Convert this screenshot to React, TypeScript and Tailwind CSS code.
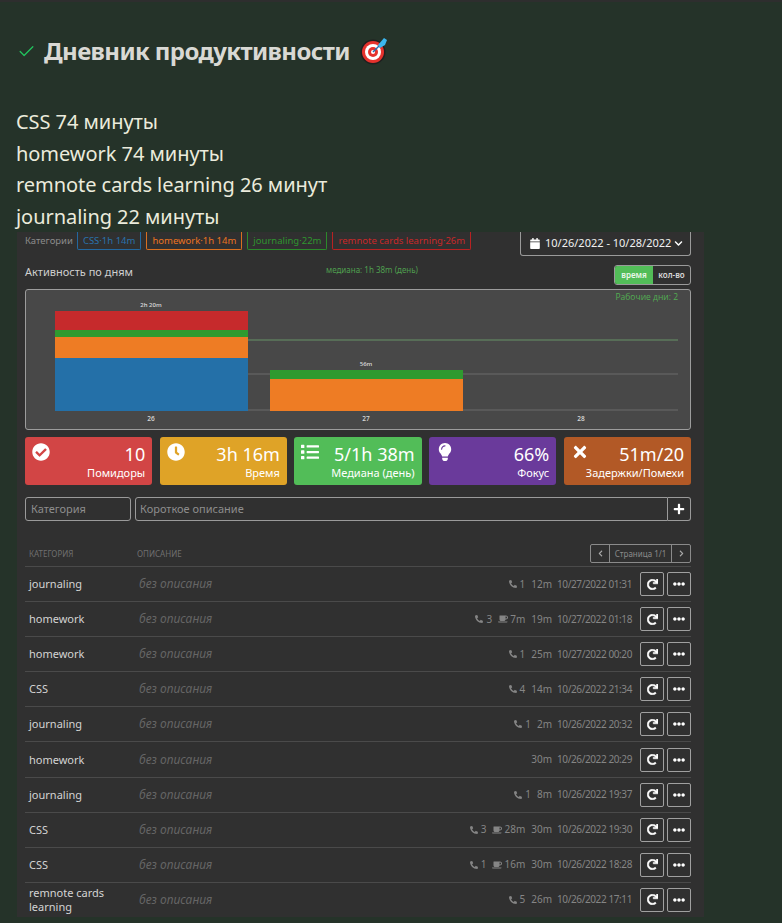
import { Check } from "lucide-react";
import { FaCalendar, FaCheckCircle, FaChevronDown, FaChevronLeft, FaChevronRight, FaClock, FaCoffee, FaEllipsisH, FaLightbulb, FaList, FaPhoneAlt, FaPlus, FaRedo, FaTimes } from "react-icons/fa";

const rows = [
  { name: "journaling", calls: "1", pause: "", dur: "12m", date: "10/27/2022 01:31" },
  { name: "homework", calls: "3", pause: "7m", dur: "19m", date: "10/27/2022 01:18" },
  { name: "homework", calls: "1", pause: "", dur: "25m", date: "10/27/2022 00:20" },
  { name: "CSS", calls: "4", pause: "", dur: "14m", date: "10/26/2022 21:34" },
  { name: "journaling", calls: "1", pause: "", dur: "2m", date: "10/26/2022 20:32" },
  { name: "homework", calls: "", pause: "", dur: "30m", date: "10/26/2022 20:29" },
  { name: "journaling", calls: "1", pause: "", dur: "8m", date: "10/26/2022 19:37" },
  { name: "CSS", calls: "3", pause: "28m", dur: "30m", date: "10/26/2022 19:30" },
  { name: "CSS", calls: "1", pause: "16m", dur: "30m", date: "10/26/2022 18:28" },
  { name: "remnote cards learning", calls: "5", pause: "", dur: "26m", date: "10/26/2022 17:11" },
];

const tags = [
  { text: "CSS·1h 14m", cls: "border-[#23689f] text-[#2a72ab]" },
  { text: "homework·1h 14m", cls: "border-[#d9701f] text-[#ec7420]" },
  { text: "journaling·22m", cls: "border-[#2b8a2b] text-[#2f952f]" },
  { text: "remnote cards learning·26m", cls: "border-[#b82222] text-[#c92828]" },
];

const cards = [
  { Icon: FaCheckCircle, value: "10", label: "Помидоры", cls: "bg-[#d24545]" },
  { Icon: FaClock, value: "3h 16m", label: "Время", cls: "bg-[#dfa327]" },
  { Icon: FaList, value: "5/1h 38m", label: "Медиана (день)", cls: "bg-[#52bd58]" },
  { Icon: FaLightbulb, value: "66%", label: "Фокус", cls: "bg-[#6a3a9b]" },
  { Icon: FaTimes, value: "51m/20", label: "Задержки/Помехи", cls: "bg-[#b25926]" },
];

function Chart() {
  return (
    <svg viewBox="0 0 664 139" className="block w-full h-[139px]">
      <line x1="29" x2="652" y1="50" y2="50" stroke="#5d7a5d" strokeWidth="1.5" />
      <line x1="29" x2="652" y1="84" y2="84" stroke="#6b6b6b" strokeWidth="1" />
      <line x1="29" x2="652" y1="120" y2="120" stroke="#6b6b6b" strokeWidth="1" />
      <rect x="29" y="21" width="193" height="19" fill="#c62a2c" />
      <rect x="29" y="40" width="193" height="7" fill="#2f9a2f" />
      <rect x="29" y="47" width="193" height="21" fill="#ee7c24" />
      <rect x="29" y="68" width="193" height="53" fill="#2470a8" />
      <rect x="244" y="80" width="193" height="9" fill="#2f9a2f" />
      <rect x="244" y="89" width="193" height="32" fill="#ee7c24" />
      <g fontFamily="'Open Sans', sans-serif" fontSize="6" fontWeight="600" fill="#d8d8d8" textAnchor="middle">
        <text x="125" y="17">2h 20m</text>
        <text x="340" y="76">56m</text>
        <text x="125" y="131" fontSize="6.5">26</text>
        <text x="340" y="131" fontSize="6.5">27</text>
        <text x="555" y="131" fontSize="6.5">28</text>
      </g>
      <text x="652" y="10" textAnchor="end" fontFamily="'Open Sans', sans-serif" fontSize="8.5" fill="#52ad52">Рабочие дни: 2</text>
    </svg>
  );
}

function Target() {
  return (
    <svg viewBox="0 0 28 28" className="w-[28px] h-[28px]">
      <circle cx="13" cy="15" r="12.5" fill="#1f1f1f" />
      <circle cx="13" cy="15" r="11" fill="#e5322d" />
      <circle cx="13" cy="15" r="8" fill="#ffffff" />
      <circle cx="13" cy="15" r="5" fill="#e5322d" />
      <circle cx="13" cy="15" r="2" fill="#ffffff" />
      <path d="M13 15 L21 7" stroke="#1f6fb5" strokeWidth="1.5" />
      <path d="M18 8 L24 1 L27 3 L25 8 L20 11 Z" fill="#3bb6ef" />
    </svg>
  );
}

export default function App() {
  return (
    <div className="w-[782px] h-[923px] overflow-hidden bg-[#253329] border-t-2 border-[#2e2e2e] font-['Noto_Sans',sans-serif]">
      <div className="pl-[17px] pt-[32px] h-[90px]">
        <div className="flex items-center h-[34px]">
          <Check className="w-[19px] h-[19px] text-[#22c55e]" strokeWidth={1.6} />
          <span className="ml-[8px] text-[24px] font-bold tracking-[-0.6px] text-[#d9d9d4] leading-[34px]">Дневник продуктивности</span>
          <span className="ml-[10px]"><Target /></span>
        </div>
      </div>
      <div className="pl-[16px] pt-[14px] text-[20px] leading-[31.7px] text-[#ebebdc] h-[140px] tracking-[-0.05px]">
        <div>CSS 74 минуты</div>
        <div>homework 74 минуты</div>
        <div>remnote cards learning 26 минут</div>
        <div>journaling 22 минуты</div>
      </div>
      <div className="ml-[17px] w-[687px] h-[685px] overflow-hidden bg-[#303030] pl-[8px] pr-[13px] font-['Open_Sans',sans-serif]">
        <div className="flex justify-between items-start h-[24px]">
          <div className="flex items-start text-[9.5px] h-[18px]">
            <span className="text-[#8b8b8b] mr-[4px] pt-[2px]">Категории</span>
            <div className="flex gap-[5px]">
              {tags.map((t) => (
                <span key={t.text} className={`border border-t-0 rounded-b-[2px] px-[5px] h-[18px] leading-[17px] whitespace-nowrap ${t.cls}`}>{t.text}</span>
              ))}
            </div>
          </div>
          <div className="flex items-center h-[24px] w-[171px] pl-[9px] border border-t-0 border-[#9a9a9a] rounded-b-[3px] text-[11px] text-[#f0f0f0] whitespace-nowrap">
            <FaCalendar className="w-[10px] h-[11px] text-white mr-[5px]" />
            <span>10/26/2022 - 10/28/2022</span>
            <FaChevronDown className="w-[9px] h-[9px] text-white ml-[3px]" />
          </div>
        </div>
        <div className="relative flex justify-between items-start h-[33px] pt-[9px]">
          <span className="text-[11px] text-[#cfcfcf] leading-[14px]">Активность по дням</span>
          <span className="absolute left-[301px] top-[8px] text-[8px] text-[#4f9f4f]">медиана: 1h 38m (день)</span>
          <div className="flex h-[20px] w-[77px] border border-[#9a9a9a] rounded-[3px] overflow-hidden text-[8px] font-semibold leading-[18px] text-center">
            <span className="w-[38px] bg-[#52bd58] text-[#eaf7ea]">время</span>
            <span className="flex-1 text-[#d8d8d8]">кол-во</span>
          </div>
        </div>
        <div className="h-[141px] border border-[#9c9c9c] rounded-[3px] bg-[#484848]">
          <Chart />
        </div>
        <div className="grid grid-cols-5 gap-[7.5px] mt-[7px]">
          {cards.map(({ Icon, value, label, cls }) => (
            <div key={label} className={`relative h-[48px] rounded-[3px] text-white text-right px-[7px] pt-[5px] ${cls}`}>
              <Icon className="absolute left-[7px] top-[6px] w-[18px] h-[18px] text-white" />
              <div className="text-[18px] leading-[24px] whitespace-nowrap">{value}</div>
              <div className="text-[11px] leading-[14px] whitespace-nowrap">{label}</div>
            </div>
          ))}
        </div>
        <div className="flex mt-[12px] h-[24px] text-[11px] text-[#8d8d8d]">
          <div className="w-[106px] border border-[#9a9a9a] rounded-[3px] pl-[5px] leading-[22px]">Категория</div>
          <div className="ml-[4px] flex-1 border border-[#9a9a9a] rounded-l-[3px] pl-[4px] leading-[22px]">Короткое описание</div>
          <div className="w-[23px] border border-l-0 border-[#9a9a9a] rounded-r-[3px] flex items-center justify-center">
            <FaPlus className="w-[12px] h-[12px] text-white" />
          </div>
        </div>
        <div className="flex items-center justify-between h-[45px] pt-[20px] pl-[4px] text-[8px] text-[#6f6f6f]">
          <div className="flex">
            <span className="w-[108px]">КАТЕГОРИЯ</span>
            <span>ОПИСАНИЕ</span>
          </div>
          <div className="flex h-[19px] border border-[#8a8a8a] rounded-[2px] text-[8px] text-[#8a8a8a]">
            <span className="w-[18px] flex items-center justify-center"><FaChevronLeft className="w-[7px] h-[7px] text-[#aaa]" /></span>
            <span className="w-[63px] border-x border-[#8a8a8a] text-center leading-[17px]">Страница 1/1</span>
            <span className="w-[18px] flex items-center justify-center"><FaChevronRight className="w-[7px] h-[7px] text-[#aaa]" /></span>
          </div>
        </div>
        {rows.map((r, i) => (
          <div key={i} className="flex items-center h-[35.1px] border-t border-[#4a4a4a] pl-[4px]">
            <div className="w-[110px] text-[11px] leading-[14px] text-[#d4d4d4]">{r.name}</div>
            <div className="flex-1 text-[12px] italic text-[#656565]">без описания</div>
            <div className="flex items-center text-[10px] text-[#858585] whitespace-nowrap">
              {r.calls && (
                <span className="flex items-center gap-[3px] mr-[6px]">
                  <FaPhoneAlt className="w-[8px] h-[8px]" />
                  {r.calls}
                </span>
              )}
              {r.pause && (
                <span className="flex items-center gap-[2px] mr-[6px]">
                  <FaCoffee className="w-[10px] h-[8px]" />
                  {r.pause}
                </span>
              )}
              <span className="mr-[5px]">{r.dur}</span>
              <span className="tracking-[-0.4px]">{r.date}</span>
            </div>
            <div className="flex gap-[3px] ml-[8px]">
              <span className="w-[24px] h-[24px] border border-[#a0a0a0] rounded-[2px] flex items-center justify-center">
                <FaRedo className="w-[11px] h-[11px] text-white" stroke="currentColor" strokeWidth={24} />
              </span>
              <span className="w-[24px] h-[24px] border border-[#a0a0a0] rounded-[2px] flex items-center justify-center">
                <FaEllipsisH className="w-[12px] h-[12px] text-white" />
              </span>
            </div>
          </div>
        ))}
      </div>
    </div>
  );
}
